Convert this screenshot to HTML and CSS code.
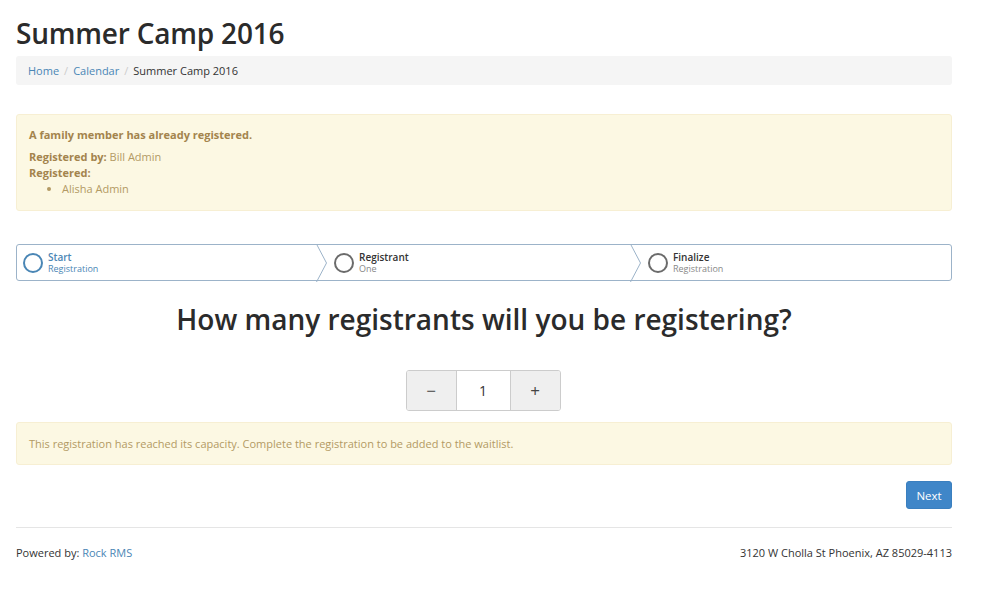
FILE: index.html
```html
<!DOCTYPE html>
<html>
<head>
<meta charset="utf-8">
<link rel="stylesheet" href="styles.css">
</head>
<body>
<div class="page">
  <h1 class="title">Summer Camp 2016</h1>
  <ol class="breadcrumb">
    <li><a href="#">Home</a></li>
    <li class="sep">/</li>
    <li><a href="#">Calendar</a></li>
    <li class="sep">/</li>
    <li class="current">Summer Camp 2016</li>
  </ol>

  <div class="alert alert-family">
    <div class="alert-title">A family member has already registered.</div>
    <div><b>Registered by:</b> Bill Admin</div>
    <div><b>Registered:</b></div>
    <ul class="reg-list"><li>Alisha Admin</li></ul>
  </div>

  <div class="wizard">
    <div class="step step-active">
      <span class="circle"></span>
      <div class="step-text"><div class="step-name">Start</div><div class="step-sub">Registration</div></div>
      <span class="chevron"><svg width="12" height="38" viewBox="0 0 12 38"><path d="M0.5 0 L10.5 19 L0.5 38" fill="none" stroke="#9cb3c9" stroke-width="1"/></svg></span>
    </div>
    <div class="step">
      <span class="circle"></span>
      <div class="step-text"><div class="step-name">Registrant</div><div class="step-sub">One</div></div>
      <span class="chevron"><svg width="12" height="38" viewBox="0 0 12 38"><path d="M0.5 0 L10.5 19 L0.5 38" fill="none" stroke="#9cb3c9" stroke-width="1"/></svg></span>
    </div>
    <div class="step step-last">
      <span class="circle"></span>
      <div class="step-text"><div class="step-name">Finalize</div><div class="step-sub">Registration</div></div>
    </div>
  </div>

  <h2 class="question">How many registrants will you be registering?</h2>

  <div class="stepper-row">
    <div class="stepper">
      <button class="btn-step">&minus;</button>
      <div class="count">1</div>
      <button class="btn-step">+</button>
    </div>
  </div>

  <div class="alert alert-capacity">This registration has reached its capacity. Complete the registration to be added to the waitlist.</div>

  <div class="actions"><button class="btn-next">Next</button></div>

  <footer class="footer">
    <div>Powered by: <a href="#">Rock RMS</a></div>
    <div>3120 W Cholla St Phoenix, AZ 85029-4113</div>
  </footer>
</div>
</body>
</html>
```

FILE: styles.css
```css
* { box-sizing: border-box; }
html, body { margin: 0; padding: 0; background: #fff; }
body {
  font-family: "Open Sans", "Noto Sans", sans-serif;
  font-size: 11px;
  color: #333;
}
a { color: #4a86b5; text-decoration: none; }
.page {
  width: 936px;
  margin-left: 16px;
  padding-top: 14px;
}
.title {
  margin: 0;
  font-size: 28px;
  font-weight: 600;
  color: #2b2b2b;
  line-height: 38px;
  letter-spacing: -0.2px;
}
.breadcrumb {
  list-style: none;
  margin: 4px 0 0;
  padding: 0 12px;
  height: 29px;
  display: flex;
  align-items: center;
  gap: 5px;
  background: #f5f5f5;
  border-radius: 3px;
}
.breadcrumb .sep { color: #ccc; }
.breadcrumb .current { color: #333; }

.alert {
  background: #fcf8e3;
  border: 1px solid #f7efd3;
  border-radius: 3px;
  color: #b39a64;
}
.alert-family {
  margin-top: 29px;
  padding: 12px 12px 12px;
  height: 97px;
  line-height: 16px;
}
.alert b { color: #a3844d; font-weight: 700; }
.alert-title { font-weight: 700; color: #a3844d; margin-bottom: 6px; }
.reg-list { margin: 0; padding-left: 33px; }

.wizard {
  margin-top: 33px;
  height: 37px;
  display: flex;
  border: 1px solid #9cb3c9;
  border-radius: 3px;
}
.step {
  position: relative;
  display: flex;
  align-items: center;
  gap: 5px;
  padding-left: 6px;
  flex: 0 0 auto;
}
.step:nth-child(1) { width: 300px; }
.step:nth-child(2) { width: 314px; padding-left: 17px; }
.step:nth-child(3) { flex: 1; padding-left: 17px; }
.circle {
  width: 20px;
  height: 20px;
  border: 2px solid #6b6b6b;
  border-radius: 50%;
  flex: 0 0 auto;
}
.step-active .circle { border-color: #4a86b5; }
.step-text { line-height: 11px; }
.step-name { font-size: 10px; font-weight: 600; color: #333; }
.step-sub { font-size: 9px; color: #888; }
.step-active .step-name, .step-active .step-sub { color: #4a86b5; }
.chevron {
  position: absolute;
  right: -11px;
  top: -1px;
  height: 37px;
  line-height: 0;
}
.chevron svg { display: block; }

.question {
  margin: 19px 0 0;
  text-align: center;
  font-size: 28px;
  font-weight: 600;
  color: #2b2b2b;
  line-height: 38px;
}
.stepper-row {
  margin-top: 32px;
  display: flex;
  justify-content: center;
  padding-right: 2px;
}
.stepper {
  display: flex;
  height: 41px;
  border: 1px solid #ccc;
  border-radius: 3px;
  overflow: hidden;
}
.btn-step {
  width: 49px;
  border: 0;
  background: #efefef;
  font-family: inherit;
  font-size: 17px;
  color: #444;
  padding: 0;
}
.count {
  width: 55px;
  border-left: 1px solid #ccc;
  border-right: 1px solid #ccc;
  display: flex;
  align-items: center;
  justify-content: center;
  font-size: 14px;
  background: #fff;
}
.alert-capacity {
  margin-top: 11px;
  height: 43px;
  padding: 0 12px;
  display: flex;
  align-items: center;
}
.actions {
  margin-top: 16px;
  display: flex;
  justify-content: flex-end;
}
.btn-next {
  width: 46px;
  height: 28px;
  border: 1px solid #3a7fbf;
  border-radius: 3px;
  background: #3f86c8;
  color: #fff;
  font-family: inherit;
  font-size: 11.5px;
  padding: 0;
}
.footer {
  margin-top: 18px;
  border-top: 1px solid #e5e5e5;
  padding-top: 17px;
  display: flex;
  justify-content: space-between;
}
```
